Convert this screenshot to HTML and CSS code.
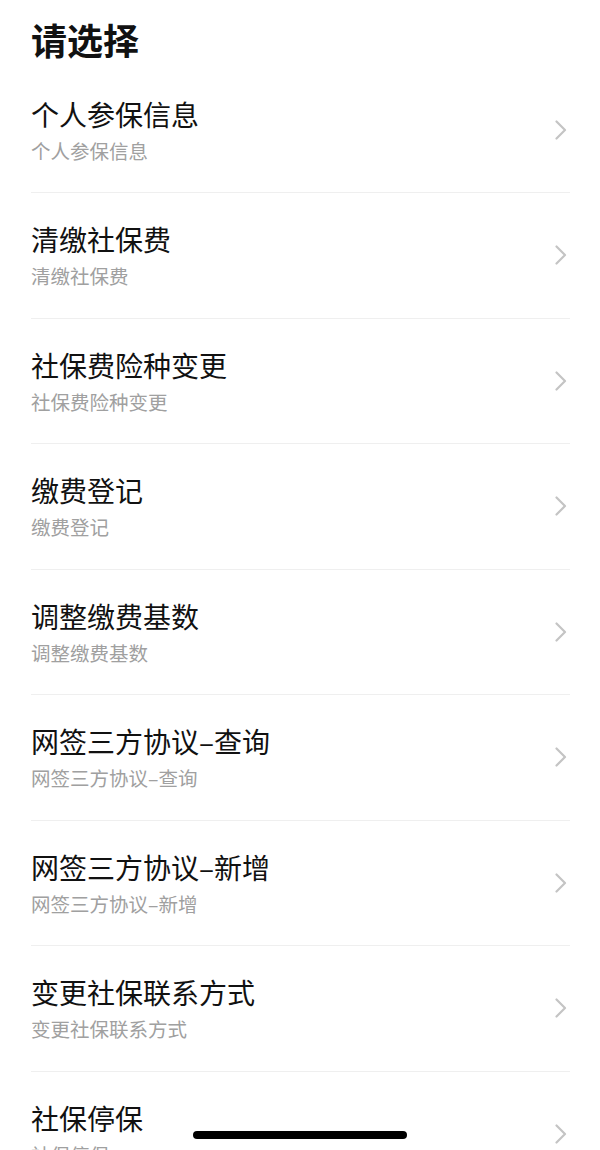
FILE: index.html
```html
<!DOCTYPE html>
<html>
<head>
  <meta charset="utf-8">
  <link rel="stylesheet" href="styles.css">
</head>
<body>
  <div class="page">
    <h1 class="title">请选择</h1>

    <ul class="menu">
      <li class="menu-item">
        <div class="item-text">
          <div class="item-title">个人参保信息</div>
          <div class="item-sub">个人参保信息</div>
        </div>
        <svg class="chevron" viewBox="0 0 12 20"><path d="M1.5 1.5 L10 10 L1.5 18.5"/></svg>
      </li>
      <li class="menu-item">
        <div class="item-text">
          <div class="item-title">清缴社保费</div>
          <div class="item-sub">清缴社保费</div>
        </div>
        <svg class="chevron" viewBox="0 0 12 20"><path d="M1.5 1.5 L10 10 L1.5 18.5"/></svg>
      </li>
      <li class="menu-item">
        <div class="item-text">
          <div class="item-title">社保费险种变更</div>
          <div class="item-sub">社保费险种变更</div>
        </div>
        <svg class="chevron" viewBox="0 0 12 20"><path d="M1.5 1.5 L10 10 L1.5 18.5"/></svg>
      </li>
      <li class="menu-item">
        <div class="item-text">
          <div class="item-title">缴费登记</div>
          <div class="item-sub">缴费登记</div>
        </div>
        <svg class="chevron" viewBox="0 0 12 20"><path d="M1.5 1.5 L10 10 L1.5 18.5"/></svg>
      </li>
      <li class="menu-item">
        <div class="item-text">
          <div class="item-title">调整缴费基数</div>
          <div class="item-sub">调整缴费基数</div>
        </div>
        <svg class="chevron" viewBox="0 0 12 20"><path d="M1.5 1.5 L10 10 L1.5 18.5"/></svg>
      </li>
      <li class="menu-item">
        <div class="item-text">
          <div class="item-title">网签三方协议–查询</div>
          <div class="item-sub">网签三方协议–查询</div>
        </div>
        <svg class="chevron" viewBox="0 0 12 20"><path d="M1.5 1.5 L10 10 L1.5 18.5"/></svg>
      </li>
      <li class="menu-item">
        <div class="item-text">
          <div class="item-title">网签三方协议–新增</div>
          <div class="item-sub">网签三方协议–新增</div>
        </div>
        <svg class="chevron" viewBox="0 0 12 20"><path d="M1.5 1.5 L10 10 L1.5 18.5"/></svg>
      </li>
      <li class="menu-item">
        <div class="item-text">
          <div class="item-title">变更社保联系方式</div>
          <div class="item-sub">变更社保联系方式</div>
        </div>
        <svg class="chevron" viewBox="0 0 12 20"><path d="M1.5 1.5 L10 10 L1.5 18.5"/></svg>
      </li>
      <li class="menu-item">
        <div class="item-text">
          <div class="item-title">社保停保</div>
          <div class="item-sub">社保停保</div>
        </div>
        <svg class="chevron" viewBox="0 0 12 20"><path d="M1.5 1.5 L10 10 L1.5 18.5"/></svg>
      </li>
    </ul>
  </div>

  <div class="home-indicator"></div>
</body>
</html>
```

FILE: styles.css
```css
:root {
  --text-primary: #111111;
  --text-secondary: #a0a0a0;
  --divider: #efefef;
  --chevron: #c4c4c4;
}

html, body {
  height: 100%;
  overflow: hidden;
}

body {
  margin: 0;
  background: #ffffff;
  color: var(--text-primary);
  font-family: "Noto Sans CJK SC", "Noto Sans", sans-serif;
}

.page {
  padding: 0 30px 0 31px;
}

.title {
  margin: 0;
  height: 67.5px;
  padding-top: 14px;
  box-sizing: border-box;
  font-size: 36px;
  line-height: 50px;
  font-weight: 700;
}

.menu {
  list-style: none;
  margin: 0;
  padding: 0;
}

.menu-item {
  display: flex;
  align-items: center;
  height: 125.5px;
  box-sizing: border-box;
  border-bottom: 1px solid var(--divider);
}

.item-text {
  flex: 1;
  display: flex;
  flex-direction: column;
  gap: 6px;
}

.item-title {
  font-size: 28px;
  line-height: 36px;
}

.item-sub {
  font-size: 19.5px;
  line-height: 26px;
  color: var(--text-secondary);
}

.chevron {
  width: 12px;
  height: 20px;
  margin-right: 3px;
  fill: none;
  stroke: var(--chevron);
  stroke-width: 2.2;
  stroke-linecap: round;
  stroke-linejoin: round;
}

.home-indicator {
  position: fixed;
  left: 193px;
  bottom: 11px;
  width: 214px;
  height: 8px;
  border-radius: 4px;
  background: #000000;
}
```
